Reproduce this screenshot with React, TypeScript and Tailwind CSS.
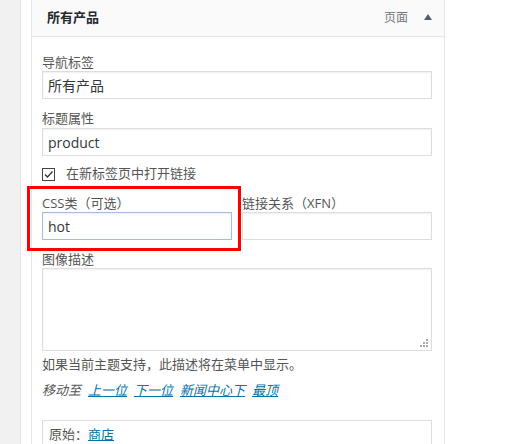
import React from "react"

function Field({ value, focused }: { value?: string; focused?: boolean }) {
  return (
    <div
      className={`h-[28px] w-full border bg-white px-[5px] flex items-center text-[14px] text-[#32373c] shadow-[inset_0_1px_2px_rgba(0,0,0,0.07)] ${
        focused ? "border-[#a3bfdc]" : "border-[#ddd]"
      }`}
    >
      {value}
    </div>
  )
}

function Label({ children, className = "" }: { children: React.ReactNode; className?: string }) {
  return <div className={`h-[18px] leading-[18px] text-[13px] text-[#555] ${className}`}>{children}</div>
}

export default function App() {
  return (
    <div className="relative flex h-[444px] w-[511px] overflow-hidden bg-white font-['Open_Sans','Noto_Sans_CJK_SC',sans-serif]">
      <div className="w-[21px] shrink-0 border-r border-[#e5e5e5] bg-[#f1f1f1]" />
      <div className="w-[10px] shrink-0" />

      {/* menu item panel */}
      <div className="w-[414px] shrink-0 border-x border-[#e5e5e5]">
        <div className="flex h-[37px] items-center border-b border-[#e5e5e5] bg-[#fafafa] pl-[15px] pr-[12px]">
          <span className="text-[13px] font-bold text-[#23282d]">所有产品</span>
          <span className="ml-auto text-[12px] text-[#72777c]">页面</span>
          <svg className="ml-[16px] mb-[3px]" width="8" height="6" viewBox="0 0 8 6">
            <path d="M4 0 L8 6 L0 6 Z" fill="#555d66" />
          </svg>
        </div>

        <div className="pl-[10px] pr-[12px] pt-[16px]">
          <Label>导航标签</Label>
          <Field value="所有产品" />

          <Label className="mt-[10px]">标题属性</Label>
          <div className="mt-[1px]">
            <Field value="product" />
          </div>

          <div className="mt-[9px] flex h-[18px] items-center gap-[11px]">
            <svg width="13" height="13" viewBox="0 0 13 13">
              <rect x="0.5" y="0.5" width="12" height="12" fill="#fff" stroke="#444" />
              <path d="M3 6.5 L5.5 9 L10.5 3.5" fill="none" stroke="#333" strokeWidth="1.3" />
            </svg>
            <span className="text-[13px] text-[#555]">在新标签页中打开链接</span>
          </div>

          <div className="mt-[12px] flex gap-[10px]">
            <div className="w-[190px]">
              <div className="h-[17px] leading-[17px] text-[13px] text-[#555]">CSS类（可选）</div>
              <Field value="hot" focused />
            </div>
            <div className="flex-1">
              <div className="h-[17px] leading-[17px] text-[13px] text-[#555]">链接关系（XFN）</div>
              <Field />
            </div>
          </div>

          <Label className="mt-[10px]">图像描述</Label>
          <div className="relative h-[83px] border border-[#ddd] shadow-[inset_0_1px_2px_rgba(0,0,0,0.07)]">
            <svg className="absolute bottom-[3px] right-[3px]" width="8" height="8" viewBox="0 0 8 8" fill="#aaa">
              <rect x="6" y="0" width="2" height="2" />
              <rect x="3" y="3" width="2" height="2" />
              <rect x="6" y="3" width="2" height="2" />
              <rect x="0" y="6" width="2" height="2" />
              <rect x="3" y="6" width="2" height="2" />
              <rect x="6" y="6" width="2" height="2" />
            </svg>
          </div>

          <div className="mt-[4px] h-[18px] leading-[18px] text-[13px] text-[#555]">
            如果当前主题支持，此描述将在菜单中显示。
          </div>

          <div className="mt-[9px] flex h-[18px] items-center gap-[7px] text-[13px] italic">
            <span className="text-[#555]">移动至</span>
            <a className="text-[#0073aa] underline">上一位</a>
            <a className="text-[#0073aa] underline">下一位</a>
            <a className="text-[#0073aa] underline">新闻中心下</a>
            <a className="text-[#0073aa] underline">最顶</a>
          </div>

          <div className="mt-[20px] border border-[#ddd] px-[6px] pt-[5px] pb-[8px]">
            <div className="flex h-[18px] items-center text-[13px]">
              <span className="text-[#555]">原始：</span>
              <a className="text-[#0073aa] underline">商店</a>
            </div>
          </div>
        </div>
      </div>

      {/* annotation */}
      <div className="absolute left-[27px] top-[186px] h-[65px] w-[214px] border-[3px] border-[#ff0000]" />
    </div>
  )
}
